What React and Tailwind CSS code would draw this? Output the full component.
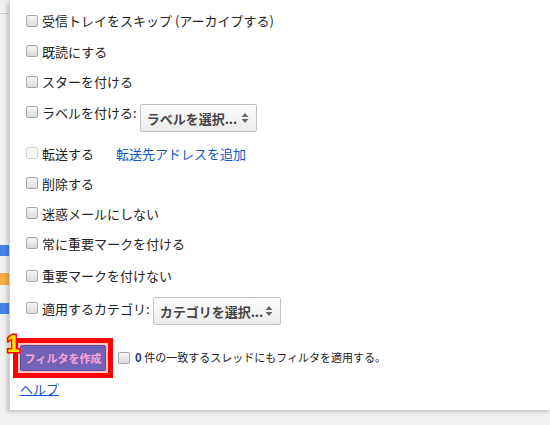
import React from "react";

const Box = ({ disabled }) => (
  <span
    className={`inline-block w-[12px] h-[12px] rounded-[2px] border shrink-0 ${
      disabled
        ? "border-[#d4d4d4] bg-[#f7f7f7]"
        : "border-[#a9a9a9] bg-gradient-to-b from-[#f6f6f6] to-[#dcdcdc]"
    }`}
  />
);

const Row = ({ h, children }) => (
  <div className="flex items-center gap-[4px] pl-[16px]" style={{ height: h }}>
    {children}
  </div>
);

const Select = ({ label, w }) => (
  <div
    className={`flex items-center justify-between h-[28px] ${w} px-[6px] border border-[#c3c3c3] rounded-[2px] bg-gradient-to-b from-[#fdfdfd] to-[#ececec] text-[#444] font-bold`}
  >
    <span>{label}</span>
    <svg width="8" height="12" viewBox="0 0 8 12" className="mr-[1px]">
      <path d="M4 1 L7.5 5 H0.5 Z" fill="#666" />
      <path d="M4 11 L7.5 7 H0.5 Z" fill="#666" />
    </svg>
  </div>
);

export default function App() {
  return (
    <div className="relative w-[550px] h-[425px] overflow-hidden bg-[#f1f1f1] text-[13px] text-[#222] font-['Noto_Sans_CJK_JP','Noto_Sans',sans-serif]">
      {/* background mail list edge */}
      <div className="absolute left-0 top-[13px] w-[9px] h-px bg-[#cfcfcf]" />
      <div className="absolute left-0 top-[245px] w-[9px] h-[11px] bg-[#4a86e8]" />
      <div className="absolute left-0 top-[273px] w-[9px] h-[12px] bg-[#ffad46]" />
      <div className="absolute left-0 top-[303px] w-[9px] h-[11px] bg-[#4a86e8]" />

      {/* filter panel */}
      <div className="absolute left-[9px] top-0 right-0 h-[410px] bg-white shadow-[-2px_2px_4px_rgba(0,0,0,0.2)] border-l border-[#d0d0d0]">
        <div className="pt-[5px] leading-none">
          <Row h={31}>
            <Box />
            <span>受信トレイをスキップ (アーカイブする)</span>
          </Row>
          <Row h={30}>
            <Box />
            <span>既読にする</span>
          </Row>
          <Row h={31}>
            <Box />
            <span>スターを付ける</span>
          </Row>
          <div className="flex items-start h-[41px] pl-[16px]">
            <div className="flex items-center gap-[4px] h-[30px]">
              <Box />
              <span>ラベルを付ける:</span>
            </div>
            <div className="mt-[7px] ml-[3px]">
              <Select label="ラベルを選択..." w="w-[117px]" />
            </div>
          </div>
          <Row h={30}>
            <Box disabled />
            <span>転送する</span>
            <span className="ml-[18px] text-[#1155cc]">転送先アドレスを追加</span>
          </Row>
          <Row h={30}>
            <Box />
            <span>削除する</span>
          </Row>
          <Row h={30}>
            <Box />
            <span>迷惑メールにしない</span>
          </Row>
          <Row h={30}>
            <Box />
            <span>常に重要マークを付ける</span>
          </Row>
          <Row h={35}>
            <Box />
            <span>重要マークを付けない</span>
          </Row>
          <div className="flex items-start h-[45px] pl-[16px]">
            <div className="flex items-center gap-[4px] h-[30px]">
              <Box />
              <span>適用するカテゴリ:</span>
            </div>
            <div className="mt-[4px] ml-[3px]">
              <Select label="カテゴリを選択..." w="w-[128px]" />
            </div>
          </div>

          <div className="flex items-center pl-[3px] h-[40px]">
            <div className="relative">
              <div className="w-[100px] h-[40px] border-[5px] border-[#ff0000] bg-[#ffc0c0] p-[2px] flex">
                <div className="flex-1 flex items-center justify-center rounded-[2px] bg-[#7363b8] border border-[#5b4c9e] text-[#f9a6d6] text-[11px] font-bold">
                  フィルタを作成
                </div>
              </div>
              <span className="absolute -left-[6px] -top-[5px] text-[23px] font-black leading-none text-[#ffe600] font-['Liberation_Sans',sans-serif] [-webkit-text-stroke:3px_#ff0000] [paint-order:stroke_fill]">
                1
              </span>
            </div>
            <div className="flex items-center gap-[5px] ml-[5px] text-[11px]">
              <Box />
              <span>
                <b className="text-[#1a3f9a] font-['Liberation_Sans',sans-serif] text-[12px]">0</b> 件の一致するスレッドにもフィルタを適用する。
              </span>
            </div>
          </div>

          <div className="pl-[10px] mt-[4px]">
            <span className="text-[#1155cc] underline">ヘルプ</span>
          </div>
        </div>
      </div>
    </div>
  );
}
